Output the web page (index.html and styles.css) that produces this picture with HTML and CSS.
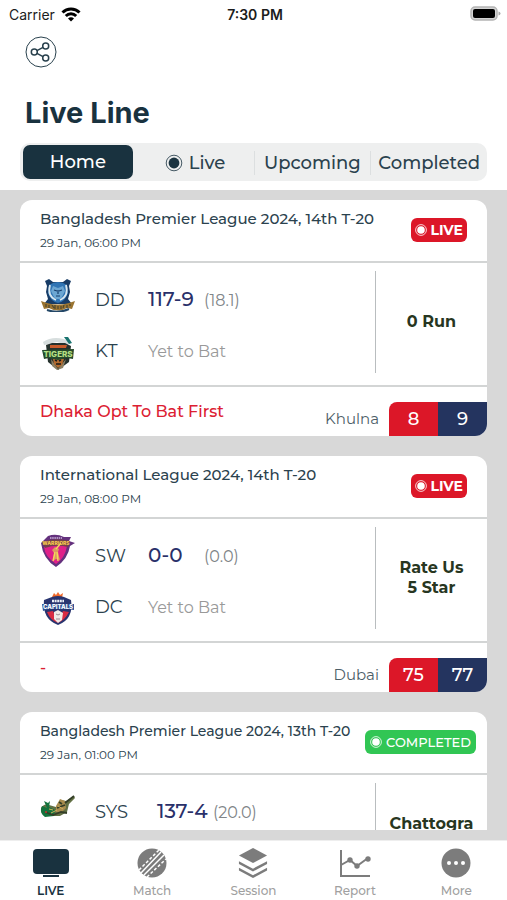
FILE: index.html
```html
<!DOCTYPE html>
<html lang="en">
<head>
    <meta charset="UTF-8">
    <meta name="viewport" content="width=device-width, initial-scale=1.0">
    <title>Live Line</title>
    <link rel="stylesheet" href="styles.css">
</head>
<body>
    <div class="status-bar">
        <div class="carrier">
            <span>Carrier</span>
            <svg width="20" height="15" viewBox="0 0 20 15" fill="none" stroke="#000" stroke-width="3">
                <path d="M1.5 5.5a12 12 0 0 1 17 0"/>
                <path d="M4.8 9a7.4 7.4 0 0 1 10.4 0"/>
                <path d="M10 14.5l-3-3a4.2 4.2 0 0 1 6 0z" fill="#000" stroke="none"/>
            </svg>
        </div>
        <div class="clock">7:30 PM</div>
        <div class="battery">
            <svg width="31" height="16" viewBox="0 0 31 16">
                <rect x="1" y="1" width="26" height="13" rx="4" fill="#d4d4d4" stroke="#b4b4b4" stroke-width="1.5"/>
                <rect x="3" y="3" width="22" height="9" rx="2" fill="#000"/>
                <path d="M28.5 5.5q2 .5 2 2t-2 2z" fill="#aaa"/>
            </svg>
        </div>
    </div>

    <header class="header">
        <button class="share" type="button" aria-label="Share">
            <svg width="32" height="32" viewBox="0 0 32 32" fill="none" stroke="#29414d">
                <circle cx="16" cy="16" r="15" stroke-width="1"/>
                <g stroke-width="1.5">
                    <circle cx="9.3" cy="16" r="3"/>
                    <circle cx="20.7" cy="10" r="3"/>
                    <circle cx="20.7" cy="22" r="3"/>
                    <path d="M12 14.6l6-3.2M12 17.4l6 3.2"/>
                </g>
            </svg>
        </button>
        <h1>Live Line</h1>
        <div class="tabs">
            <button class="tab active" type="button">Home</button>
            <button class="tab" type="button">
                <svg width="18" height="18" viewBox="0 0 18 18">
                    <circle cx="9" cy="9" r="7.8" fill="none" stroke="#1b3441" stroke-width="0.8"/>
                    <circle cx="9" cy="9" r="5.4" fill="#1b3441"/>
                </svg>
                Live
            </button>
            <button class="tab divided" type="button">Upcoming</button>
            <button class="tab divided" type="button">Completed</button>
        </div>
    </header>

    <main class="feed">
        <div class="feed-list">
            <article class="card">
                <div class="card-top">
                    <div>
                        <h2>Bangladesh Premier League 2024, 14th T-20</h2>
                        <p class="date">29 Jan, 06:00 PM</p>
                    </div>
                    <span class="badge">
                        <svg width="12" height="12" viewBox="0 0 12 12"><circle cx="6" cy="6" r="5.4" fill="none" stroke="#fff" stroke-width="0.8"/><circle cx="6" cy="6" r="3.8" fill="#fff"/></svg>
                        LIVE
                    </span>
                </div>
                <div class="card-body">
                    <div class="crests">
                        <!-- Dhaka -->
                        <svg class="crest" viewBox="0 0 34 34">
                            <path d="M4 3l4-2 4 3h10l4-3 4 2-2 5 1 6-2 7 4 5H3l4-5-2-7 1-6z" fill="#183c66"/>
                            <path d="M8 7q9-6 18 0l1 8q-3 9-10 10Q10 24 7 15z" fill="#2f74b4"/>
                            <path d="M9 7q-3 11 6 15M25 7q3 11-6 15" fill="none" stroke="#dce8ef" stroke-width="1.8"/>
                            <path d="M12 8l5 2 5-2 2 5-4 8h-6l-4-8z" fill="#6ca6d2"/>
                            <path d="M13 12l3 1M21 12l-3 1M15 18h4M17 12v4" stroke="#173e6c" stroke-width="1.2"/>
                            <path d="M0 23l6 2q11 3 22 0l6-2-3 8-5-1q-9 5-18 0l-5 1z" fill="#9a7431"/>
                            <path d="M6 32q11 4 22-1" fill="none" stroke="#234767" stroke-width="2"/>
                            <path d="M5 26v3M8 27v3M11 27l2 3M14 27v4M17 28v3M20 28v3M23 27l-1 3M26 27v3M29 26v2" stroke="#4c472f" stroke-width="1.2"/>
                        </svg>
                        <!-- Khulna Tigers -->
                        <svg class="crest" viewBox="0 0 34 34">
                            <path d="M2 6q12-8 28 0l-4 3-10-3-13 3z" fill="#d7dede"/>
                            <path d="M23 1l4 0 4 6-3 1z" fill="#19736f"/>
                            <path d="M5 9l6-2h13l6 3-2 16-11 8-10-8z" fill="#25312d"/>
                            <path d="M9 9h17l-1 3H9z" fill="#c75b2b"/>
                            <path d="M10 23l7 10 8-10-3 9-6 2-5-4z" fill="#8d8064"/>
                            <path d="M12 23l5-3 6 3-2 6-4 3-4-4z" fill="#b26a2e"/>
                            <path d="M14 24l2 1M20 24l-2 1M15 28h5" stroke="#1a1a18" stroke-width="1.4"/>
                            <path d="M1 14l32-1-1 10-6-1-9 2-9-2-5 1z" fill="#274a2b"/>
                            <text x="17" y="21" class="crest-text big lime">TIGERS</text>
                        </svg>
                    </div>
                    <div class="teams">
                        <div class="team">
                            <span class="code">DD</span>
                            <span class="score">117-9</span>
                            <span class="overs">(18.1)</span>
                        </div>
                        <div class="team">
                            <span class="code">KT</span>
                            <span class="waiting">Yet to Bat</span>
                        </div>
                    </div>
                    <div class="result">0 Run</div>
                </div>
                <div class="card-bottom">
                    <p class="toss">Dhaka Opt To Bat First</p>
                    <div class="odds">
                        <span class="favourite">Khulna</span>
                        <span class="rate back">8</span>
                        <span class="rate lay">9</span>
                    </div>
                </div>
            </article>

            <article class="card">
                <div class="card-top">
                    <div>
                        <h2>International League 2024, 14th T-20</h2>
                        <p class="date">29 Jan, 08:00 PM</p>
                    </div>
                    <span class="badge">
                        <svg width="12" height="12" viewBox="0 0 12 12"><circle cx="6" cy="6" r="5.4" fill="none" stroke="#fff" stroke-width="0.8"/><circle cx="6" cy="6" r="3.8" fill="#fff"/></svg>
                        LIVE
                    </span>
                </div>
                <div class="card-body">
                    <div class="crests">
                        <!-- Warriors -->
                        <svg class="crest" viewBox="0 0 34 34">
                            <path d="M0 9l7-7q8-3 16 1l7 0-2 4 6 2-5 3q-2 13-14 21Q2 25 0 9z" fill="#64317d"/>
                            <path d="M3 13l10-3 13 2q-2 12-11 18Q4 23 3 13z" fill="#df2089"/>
                            <path d="M1 8q13-5 28-1l-2 6q-12-3-23 1z" fill="#74404d"/>
                            <path d="M14 13l4 2-1 3 2 8-4-1-3 2 1-8-2-3z" fill="#dc9c61"/>
                            <path d="M15 15l5-6M14 18l-2 9M16 18l1 9" stroke="#f4d85a" stroke-width="1.4"/>
                            <text x="15" y="11" class="crest-text gold">WARRIORS</text>
                            <path d="M9 4h12" stroke="#cdb7dc" stroke-width="1.5" stroke-dasharray="1.5 0.7"/>
                        </svg>
                        <!-- Dubai Capitals -->
                        <svg class="crest" viewBox="0 0 34 34">
                            <path d="M11 5l2-4 2 2 2-3 2 3 3-2-1 5z" fill="#f06a2b"/>
                            <path d="M3 8l8-3q6-2 12 0l7 3q3 19-13 25Q1 27 3 8z" fill="#28346f"/>
                            <path d="M6 20l6-1 5 12 5-12 6 1q-4 8-11 11Q9 28 6 20z" fill="#d92c43"/>
                            <path d="M13 20l4-2 5 3-1 7-4 3-4-4z" fill="#f1ebe7"/>
                            <path d="M15 22l2 1 2-1M15 27h4" fill="none" stroke="#9a8992"/>
                            <path d="M1 12h32v6l-6-1H8l-6 2z" fill="#2e5195"/>
                            <path d="M11 9h12" stroke="#e9edf5" stroke-width="2.5" stroke-dasharray="2 0.6"/>
                            <text x="17" y="17" class="crest-text medium white">CAPITALS</text>
                        </svg>
                    </div>
                    <div class="teams">
                        <div class="team">
                            <span class="code">SW</span>
                            <span class="score">0-0</span>
                            <span class="overs">(0.0)</span>
                        </div>
                        <div class="team">
                            <span class="code">DC</span>
                            <span class="waiting">Yet to Bat</span>
                        </div>
                    </div>
                    <div class="result">Rate Us<br>5 Star</div>
                </div>
                <div class="card-bottom">
                    <p class="toss">-</p>
                    <div class="odds">
                        <span class="favourite">Dubai</span>
                        <span class="rate back">75</span>
                        <span class="rate lay">77</span>
                    </div>
                </div>
            </article>

            <article class="card">
                <div class="card-top completed">
                    <div>
                        <h2>Bangladesh Premier League 2024, 13th T-20</h2>
                        <p class="date">29 Jan, 01:00 PM</p>
                    </div>
                    <span class="badge done">
                        <svg width="12" height="12" viewBox="0 0 12 12"><circle cx="6" cy="6" r="5.4" fill="none" stroke="#fff" stroke-width="0.8"/><circle cx="6" cy="6" r="3.8" fill="#fff"/></svg>
                        COMPLETED
                    </span>
                </div>
                <div class="card-body">
                    <div class="crests">
                        <!-- Sylhet -->
                        <svg class="crest" viewBox="0 0 34 34">
                            <path d="M0 18q3-5 8-3l7 2 5-7 5 1 8-5 1 2-6 6-2 8-7 4H5q-6-2-5-8z" fill="#627044"/>
                            <path d="M1 16l5 2-3-7 4 2 2-2-1 6 6 3-1 6-9 1q-6-4-3-11z" fill="#13733d"/>
                            <path d="M15 16l4-7 5 2 1 7-5 5-5-1z" fill="#a98c4e"/>
                            <path d="M24 13l9-7M4 22l8 3 8-3 6 1M16 18l8-3M18 12l3 2" stroke="#333d27" stroke-width="1.8" fill="none"/>
                            <path d="M8 19l4 1M10 23l6-3M17 16l5 3" stroke="#d1af5c"/>
                            <circle cx="5" cy="22" r="1" fill="#c43832"/>
                        </svg>
                    </div>
                    <div class="teams">
                        <div class="team long">
                            <span class="code">SYS</span>
                            <span class="score">137-4</span>
                            <span class="overs">(20.0)</span>
                        </div>
                    </div>
                    <div class="result">Chattogra<br><br></div>
                </div>
            </article>
        </div>
    </main>

    <nav class="bottom-nav">
        <a class="active" href="#live">
            <svg width="36" height="30" viewBox="0 0 36 30" fill="currentColor">
                <rect x="0" y="1" width="36" height="25" rx="4"/>
                <rect x="10" y="27" width="16" height="2"/>
            </svg>
            LIVE
        </a>
        <a href="#match">
            <svg width="30" height="30" viewBox="0 0 30 30">
                <circle cx="15" cy="15" r="14.5" fill="currentColor"/>
                <g stroke="#fff" stroke-width="1.5">
                    <path d="M4 25L24 4M7 27L27 7"/>
                    <path d="M2 22L22 2M10 29L29 11" stroke-dasharray="3 2"/>
                </g>
            </svg>
            Match
        </a>
        <a href="#session">
            <svg width="32" height="32" viewBox="0 0 32 32">
                <path d="M16 0l15 8-15 8L1 8z" fill="currentColor"/>
                <path d="M1 14l15 8 15-8v3l-15 8-15-8zM1 21l15 8 15-8v3l-15 8-15-8z" fill="currentColor"/>
            </svg>
            Session
        </a>
        <a href="#report">
            <svg width="32" height="30" viewBox="0 0 32 30" fill="none" stroke="currentColor" stroke-width="2">
                <path d="M2 2v26h29M2 17l9-5 7 6 11-8"/>
                <g fill="currentColor" stroke="none">
                    <circle cx="11" cy="12" r="2.7"/>
                    <circle cx="18" cy="18" r="2.7"/>
                    <circle cx="29" cy="11" r="2.7"/>
                </g>
            </svg>
            Report
        </a>
        <a href="#more">
            <svg width="30" height="30" viewBox="0 0 30 30">
                <circle cx="15" cy="15" r="14.5" fill="currentColor"/>
                <g fill="#fff">
                    <circle cx="8" cy="15" r="2"/>
                    <circle cx="15" cy="15" r="2"/>
                    <circle cx="22" cy="15" r="2"/>
                </g>
            </svg>
            More
        </a>
    </nav>
</body>
</html>
```

FILE: styles.css
```css
* {
    box-sizing: border-box;
}

body {
    font-family: Montserrat, Inter, sans-serif;
    background-color: #ffffff;
    color: #2b424e;
    margin: 0;
    height: 100vh;
    display: flex;
    flex-direction: column;
}

h1, h2, p {
    margin: 0;
}

button {
    font-family: inherit;
    color: inherit;
    background: none;
    border: none;
    padding: 0;
    cursor: pointer;
}

svg {
    display: block;
    flex-shrink: 0;
}

/* Status bar */
.status-bar {
    display: grid;
    grid-template-columns: 1fr auto 1fr;
    align-items: center;
    height: 28px;
    padding: 0 6px 0 9px;
    font-family: Inter, sans-serif;
    font-size: 14px;
    color: #1c1c1c;
}

.carrier {
    display: flex;
    align-items: center;
    gap: 6px;
}

.clock {
    font-weight: 600;
}

.battery {
    justify-self: end;
}

/* Header */
.header {
    padding: 8px 20px 9px;
}

.share {
    display: block;
    margin-left: 5px;
}

.header h1 {
    margin: 26px 0 12px 5px;
    font-family: Inter, sans-serif;
    font-size: 29px;
    line-height: 37px;
    font-weight: 700;
    color: #19323f;
}

.tabs {
    display: grid;
    grid-template-columns: repeat(4, 1fr);
    height: 38px;
    background-color: #eeefef;
    border-radius: 10px;
}

.tab {
    display: flex;
    align-items: center;
    justify-content: center;
    gap: 6px;
    margin: 8px 0 6px;
    font-size: 18px;
    font-weight: 500;
}

.tab.divided {
    border-left: 1px solid #dcdfe0;
}

.tab.active {
    margin: 2px 4px 2px 3px;
    background-color: #19323f;
    color: #ffffff;
    border-radius: 7px;
}

/* Match feed */
.feed {
    flex: 1;
    min-height: 0;
    padding: 10px 20px;
    background-color: #d8d8d8;
}

.feed-list {
    height: 100%;
    overflow: hidden;
    display: flex;
    flex-direction: column;
    gap: 20px;
}

.card {
    flex-shrink: 0;
    background-color: #ffffff;
    border-radius: 12px;
    overflow: hidden;
}

.card-top {
    display: flex;
    justify-content: space-between;
    align-items: center;
    height: 61px;
    padding: 0 20px 2px;
}

.card-top.completed {
    padding-right: 11px;
}

.card-top h2 {
    font-size: 15px;
    line-height: 20px;
    font-weight: 500;
    white-space: nowrap;
}

.card-top.completed h2 {
    font-size: 14px;
}

.date {
    margin-top: 6px;
    font-size: 12px;
    line-height: 16px;
}

.badge {
    display: flex;
    align-items: center;
    gap: 4px;
    height: 24px;
    padding: 0 4px;
    background-color: #dc1728;
    color: #ffffff;
    border-radius: 6px;
    font-size: 14px;
    font-weight: 700;
}

.badge.done {
    padding: 0 5px;
    background-color: #31c654;
    font-size: 13px;
    font-weight: 500;
}

.card-body {
    display: flex;
    min-height: 126px;
    border-top: 2px solid #d3d5d5;
    border-bottom: 2px solid #d3d5d5;
}

.crests {
    display: flex;
    flex-direction: column;
    gap: 24px;
    padding: 15px 19px 0 20px;
}

.crest {
    width: 36px;
    height: 34px;
}

.crest-text {
    font-family: Inter, sans-serif;
    font-size: 5px;
    font-weight: 800;
    text-anchor: middle;
}

.crest-text.medium {
    font-size: 6px;
}

.crest-text.big {
    font-size: 8px;
}

.crest-text.lime {
    fill: #b7e084;
}

.crest-text.gold {
    fill: #f8c84c;
}

.crest-text.white {
    fill: #ffffff;
}

.teams {
    flex: 1;
    display: flex;
    flex-direction: column;
    gap: 26px;
    padding-top: 23px;
}

.team {
    display: flex;
    align-items: baseline;
    height: 26px;
    line-height: 26px;
}

.code {
    min-width: 53px;
    font-size: 18px;
}

.long .code {
    min-width: 62px;
}

.score {
    min-width: 56px;
    font-size: 20px;
    font-weight: 500;
    color: #29306a;
}

.overs {
    font-size: 16px;
    color: #808588;
}

.waiting {
    font-size: 16px;
    color: #999999;
}

.result {
    display: flex;
    align-items: center;
    justify-content: center;
    width: 24%;
    margin: 8px 0 12px;
    border-left: 1px solid #b9bdbf;
    font-size: 16px;
    line-height: 20px;
    font-weight: 700;
    text-align: center;
    color: #273621;
}

.card-bottom {
    display: flex;
    justify-content: space-between;
    height: 49px;
    padding-left: 20px;
}

.toss {
    align-self: center;
    font-size: 16px;
    font-weight: 500;
    color: #dc2032;
}

.odds {
    display: flex;
    align-self: flex-end;
    line-height: 34px;
}

.favourite {
    margin-right: 10px;
    font-size: 15px;
    color: #4d5e68;
}

.rate {
    width: 49px;
    text-align: center;
    font-size: 18px;
    font-weight: 500;
    color: #ffffff;
}

.back {
    background-color: #dc1728;
    border-top-left-radius: 8px;
}

.lay {
    background-color: #24345f;
}

/* Bottom navigation */
.bottom-nav {
    display: grid;
    grid-template-columns: repeat(5, 1fr);
    height: 60px;
    border-top: 1px solid #eeeeee;
}

.bottom-nav a {
    display: flex;
    flex-direction: column;
    align-items: center;
    justify-content: space-between;
    padding: 7px 0 2px;
    font-size: 12px;
    line-height: 15px;
    font-weight: 500;
    color: #a0a0a0;
    text-decoration: none;
}

.bottom-nav svg {
    height: 30px;
    color: #7c7c7c;
}

.bottom-nav a.active {
    font-weight: 600;
    color: #19323f;
}

.bottom-nav .active svg {
    color: #19323f;
}
```
